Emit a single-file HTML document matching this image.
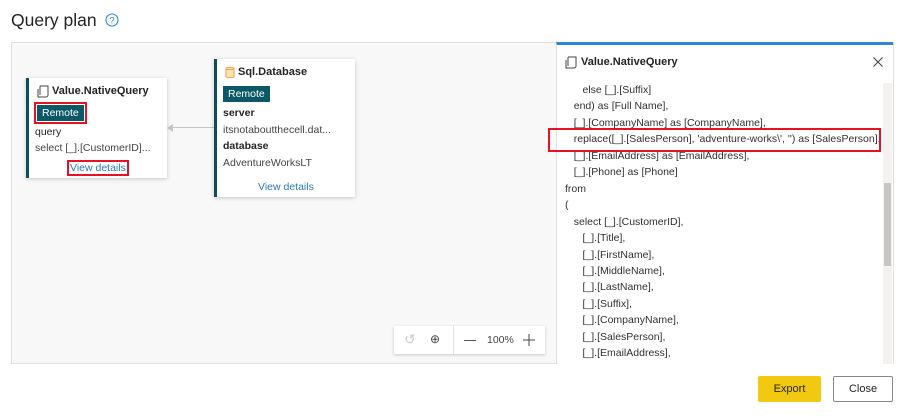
<!DOCTYPE html>
<html><head><style>
*{box-sizing:border-box;margin:0;padding:0}
body{width:906px;height:419px;background:#fff;font-family:"Liberation Sans",sans-serif;color:#252423;position:relative;overflow:hidden}
.a{position:absolute}
.title{left:11px;top:10px;font-size:17.5px;color:#252423}
.canvas{left:11px;top:42px;width:883px;height:322px;background:#f8f8f8;border:1px solid #e1dfdd}
.card{background:#fff;border-left:3px solid #0b4f5c;box-shadow:0 1px 4px rgba(0,0,0,.2);font-size:10.5px}
.card b{font-size:11px}
.rem{background:#0b5866;color:#fff;font-size:10.5px;padding:2px 5px;display:inline-block}
.red{outline:2px solid #e81123}
.link{color:#2a7ab8}
.panel{left:556px;top:42px;width:337px;height:322px;background:#fff;border-top:3px solid #2b88d8;border-left:1px solid #e1dfdd}
.code{font-size:10.5px;line-height:16.45px;color:#323130;white-space:pre}
.btn{font-size:11px;text-align:center;line-height:26px;border-radius:2px}
</style></head><body>
<div class="a title">Query plan</div>
<svg class="a" style="left:105px;top:13px" width="14" height="14" viewBox="0 0 14 14"><circle cx="7" cy="7" r="6" fill="none" stroke="#2b88d8" stroke-width="1.1"/><text x="7" y="10.5" font-size="9.5" text-anchor="middle" fill="#2b88d8" font-family="Liberation Sans">?</text></svg>
<div class="a canvas"></div>
<div class="a" style="left:170px;top:127px;width:44px;height:1px;background:#c8c6c4"></div>
<div class="a" style="left:167px;top:124px;width:0;height:0;border-top:4px solid transparent;border-bottom:4px solid transparent;border-right:6px solid #c8c6c4"></div>
<div class="a card" style="left:26px;top:78px;width:141px;height:100px">
 <svg class="a" style="left:8px;top:7px" width="12" height="13" viewBox="0 0 12 13"><path d="M3 1h8v9a2 2 0 0 1-2 2H1V4M3 1v9M1 12h8" fill="none" stroke="#444" stroke-width="1"/></svg>
 <b class="a" style="left:23px;top:7px">Value.NativeQuery</b>
 <div class="a rem red" style="left:8px;top:27px;outline-offset:1px">Remote</div>
 <div class="a" style="left:6px;top:48px">query</div>
 <div class="a" style="left:6px;top:64px;color:#444">select [_].[CustomerID]...</div>
 <div class="a link red" style="left:40px;top:84px;padding:0 1px">View details</div>
</div>
<div class="a card" style="left:214px;top:59px;width:141px;height:138px">
 <svg class="a" style="left:8px;top:7px" width="10" height="13" viewBox="0 0 10 13"><path d="M1 2.5v8c0 1.5 8 1.5 8 0v-8c0-1.5-8-1.5-8 0c0 1.5 8 1.5 8 0" fill="#fce4b8" stroke="#e8a33d" stroke-width="1"/></svg>
 <b class="a" style="left:21px;top:7px">Sql.Database</b>
 <div class="a rem" style="left:6px;top:27px">Remote</div>
 <b class="a" style="left:6px;top:48px;font-size:10.5px">server</b>
 <div class="a" style="left:6px;top:65px;color:#444">itsnotaboutthecell.dat...</div>
 <b class="a" style="left:6px;top:81px;font-size:10.5px">database</b>
 <div class="a" style="left:6px;top:98px;color:#444">AdventureWorksLT</div>
 <div class="a link" style="left:41px;top:122px">View details</div>
</div>
<div class="a" style="left:394px;top:326px;width:151px;height:28px;background:#fff;box-shadow:0 1px 3px rgba(0,0,0,.2);font-size:10.5px;color:#444">
 <span class="a" style="left:10px;top:5px;color:#ccc;font-size:14px">↺</span>
 <span class="a" style="left:36px;top:6px;font-size:12px">⊕</span>
 <div class="a" style="left:59px;top:0;width:1px;height:28px;background:#e1dfdd"></div>
 <div class="a" style="left:70px;top:14px;width:12px;height:1px;background:#555"></div>
 <span class="a" style="left:93px;top:8px">100%</span>
 <svg class="a" style="left:129px;top:8px" width="12" height="12"><path d="M6 0v12M0 6h12" stroke="#444" stroke-width="1"/></svg>
</div>
<div class="a panel">
 <svg class="a" style="left:8px;top:11px" width="12" height="13" viewBox="0 0 12 13"><path d="M3 1h8v9a2 2 0 0 1-2 2H1V4M3 1v9M1 12h8" fill="none" stroke="#444" stroke-width="1"/></svg>
 <b class="a" style="left:24px;top:11px;font-size:11px">Value.NativeQuery</b>
 <svg class="a" style="left:316px;top:12px" width="10" height="10"><path d="M0.5 0.5l9 9M9.5 0.5l-9 9" stroke="#444" stroke-width="1.1"/></svg>
 <div class="a" style="left:0;top:38px;width:324px;height:281px;overflow:hidden">
 <div class="code" style="margin-left:8px;margin-top:-1px">      else [_].[Suffix]
   end) as [Full Name],
   [_].[CompanyName] as [CompanyName],
   replace([_].[SalesPerson], 'adventure-works\', '') as [SalesPerson],
   [_].[EmailAddress] as [EmailAddress],
   [_].[Phone] as [Phone]
from
(
   select [_].[CustomerID],
      [_].[Title],
      [_].[FirstName],
      [_].[MiddleName],
      [_].[LastName],
      [_].[Suffix],
      [_].[CompanyName],
      [_].[SalesPerson],
      [_].[EmailAddress],
      [_].[Phone],</div></div>
 <div class="a red" style="left:-7px;top:85px;width:329px;height:20px;outline-width:2px"></div>
 <div class="a" style="left:326px;top:38px;width:9px;height:281px;background:#f3f2f1"></div>
 <div class="a" style="left:327px;top:138px;width:7px;height:83px;background:#c8c6c4"></div>
</div>
<div class="a btn" style="left:758px;top:376px;width:63px;height:26px;background:#f2c811;color:#252423">Export</div>
<div class="a btn" style="left:833px;top:376px;width:60px;height:26px;border:1px solid #8a8886;line-height:24px">Close</div>
</body></html>
